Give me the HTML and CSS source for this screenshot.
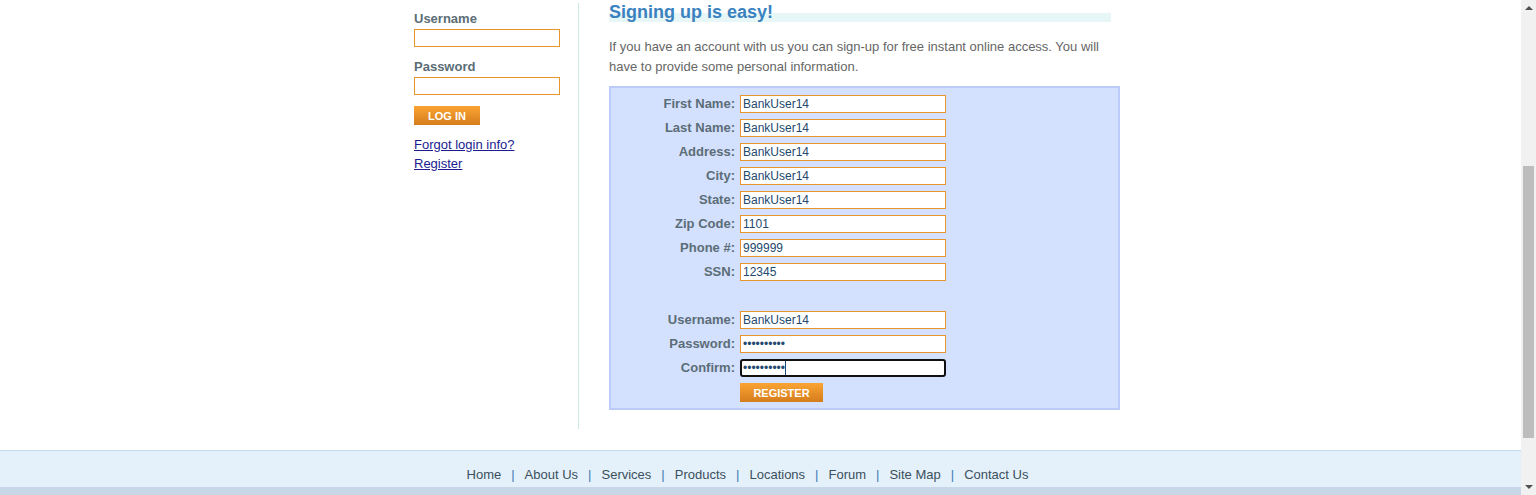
FILE: index.html
```html
<!DOCTYPE html>
<html>
<head>
<meta charset="utf-8">
<link rel="stylesheet" href="styles.css">
</head>
<body>
<div class="window">
  <div class="page">
    <div class="content">
      <div class="left-panel">
        <form class="login">
          <label class="login-label">Username</label>
          <input class="login-input" type="text">
          <label class="login-label">Password</label>
          <input class="login-input" type="password">
          <button type="button" class="btn btn-login">LOG IN</button>
        </form>
        <div class="login-links">
          <a href="#">Forgot login info?</a>
          <a href="#">Register</a>
        </div>
      </div>
      <div class="right-panel">
        <h1 class="title">Signing up is easy!</h1>
        <p class="intro">If you have an account with us you can sign-up for free instant online access. You will have to provide some personal information.</p>
        <form class="reg-box">
          <label class="reg-label">First Name:</label><input class="reg-input" type="text" value="BankUser14">
          <label class="reg-label">Last Name:</label><input class="reg-input" type="text" value="BankUser14">
          <label class="reg-label">Address:</label><input class="reg-input" type="text" value="BankUser14">
          <label class="reg-label">City:</label><input class="reg-input" type="text" value="BankUser14">
          <label class="reg-label">State:</label><input class="reg-input" type="text" value="BankUser14">
          <label class="reg-label">Zip Code:</label><input class="reg-input" type="text" value="1101">
          <label class="reg-label">Phone #:</label><input class="reg-input" type="text" value="999999">
          <label class="reg-label">SSN:</label><input class="reg-input" type="text" value="12345">
          <div class="reg-spacer"></div><div class="reg-spacer"></div>
          <label class="reg-label">Username:</label><input class="reg-input" type="text" value="BankUser14">
          <label class="reg-label">Password:</label><input class="reg-input" type="password" value="bankuser14">
          <label class="reg-label">Confirm:</label>
          <div class="focused-wrap"><input class="reg-input focused" type="password" value="bankuser14"><span class="caret"></span></div>
          <div></div><div><button type="button" class="btn btn-register">REGISTER</button></div>
        </form>
      </div>
    </div>
    <div class="footer">
      <div class="footer-links">
        <a href="#">Home</a><span class="sep">|</span>
        <a href="#">About Us</a><span class="sep">|</span>
        <a href="#">Services</a><span class="sep">|</span>
        <a href="#">Products</a><span class="sep">|</span>
        <a href="#">Locations</a><span class="sep">|</span>
        <a href="#">Forum</a><span class="sep">|</span>
        <a href="#">Site Map</a><span class="sep">|</span>
        <a href="#">Contact Us</a>
      </div>
      <div class="footer-strip"></div>
    </div>
  </div>
  <div class="scrollbar">
    <div class="arrow arrow-up"></div>
    <div class="track"><div class="thumb"></div></div>
    <div class="arrow arrow-down"></div>
  </div>
</div>
</body>
</html>
```

FILE: styles.css
```css
* { box-sizing: border-box; }
html, body { margin: 0; padding: 0; height: 100%; overflow: hidden; }
body {
  font-family: "Liberation Sans", Arial, sans-serif;
  font-size: 13px;
  color: #666666;
  background: #ffffff;
}
.window { display: flex; width: 1536px; height: 495px; }
.page { flex: 1; display: flex; flex-direction: column; min-width: 0; }
.content { display: flex; padding-left: 414px; padding-top: 3px; height: 450px; flex-shrink: 0; }

.left-panel {
  width: 165px;
  height: 426px;
  border-right: 1px solid #cce8e4;
  padding-top: 7px;
}
.login { display: flex; flex-direction: column; align-items: flex-start; }
.login-label { font-weight: bold; color: #5b6d76; font-size: 13px; line-height: 18px; margin-bottom: 1px; }
.login-input {
  width: 146px; height: 18px;
  border: 1px solid #e8952e;
  background: #fff;
  margin: 0 0 11px 0;
  padding: 0 3px;
  font: 12px "Liberation Sans", Arial, sans-serif;
}
.btn {
  border: 0;
  color: #ffffff;
  font: bold 11px "Liberation Sans", Arial, sans-serif;
  background: linear-gradient(#fba434, #d47d1c);
  height: 19px;
  padding: 0;
  cursor: pointer;
}
.btn-login { width: 66px; margin-top: 0; }
.login-links { display: flex; flex-direction: column; align-items: flex-start; margin-top: 10px; }
.login-links a { color: #1a1c8f; text-decoration: underline; line-height: 19px; font-size: 13px; }

.right-panel { padding-left: 30px; width: 541px; }
.title {
  margin: 0;
  font-size: 18px;
  font-weight: bold;
  color: #3a82bf;
  line-height: 19px;
  background: linear-gradient(to bottom, transparent 10px, #e7f6f6 10px, #e7f6f6 19px, transparent 19px);
  width: 502px;
}
.intro { margin: 15px 0 9px 0; line-height: 20px; width: 500px; }
.reg-box {
  width: 511px;
  height: 324px;
  background: #d3e0fe;
  border: 2px solid #bccbf9;
  display: grid;
  grid-template-columns: 124px 206px;
  column-gap: 5px;
  row-gap: 6px;
  grid-auto-rows: 18px;
  padding-top: 7px;
  align-content: start;
}
.reg-label { text-align: right; font-weight: bold; color: #5b6d76; line-height: 18px; font-size: 13px; }
.reg-input {
  width: 206px; height: 18px;
  border: 1px solid #e8952e;
  background: #fff;
  margin: 0;
  padding: 0 2px;
  color: #23496e;
  font: 12px "Liberation Sans", Arial, sans-serif;
  display: block;
}
.focused-wrap { position: relative; width: 206px; height: 18px; }
.focused {
  border: 2px solid #111;
  border-radius: 3px;
  padding-left: 1px;
}
.caret { position: absolute; left: 45px; top: 2px; width: 1px; height: 14px; background: #1e4a78; }
.btn-register { width: 83px; margin-top: 0; }

.footer { border-top: 1px solid #c5d9ea; background: #e4f1fb; flex: 1; display: flex; flex-direction: column; }
.footer-links { flex: 1; display: flex; justify-content: center; align-items: center; padding-top: 11px; padding-right: 26px; }
.footer-links a { color: #3b4f5c; text-decoration: none; font-size: 13px; }
.sep { color: #3f7bb3; margin: 0 10px; font-size: 13px; }
.footer-strip { height: 8px; background: #c8d7e7; }

.scrollbar { width: 15px; background: #f1f1f1; display: flex; flex-direction: column; }
.arrow { height: 15px; position: relative; }
.arrow-up::after, .arrow-down::after {
  content: ""; position: absolute; left: 4px; width: 0; height: 0;
  border-left: 4px solid transparent; border-right: 4px solid transparent;
}
.arrow-up::after { top: 6px; border-bottom: 4px solid #505050; }
.arrow-down::after { top: 5px; border-top: 4px solid #505050; }
.track { flex: 1; padding: 151px 2px 0 2px; }
.thumb { height: 272px; background: #bdbdbd; }
```
